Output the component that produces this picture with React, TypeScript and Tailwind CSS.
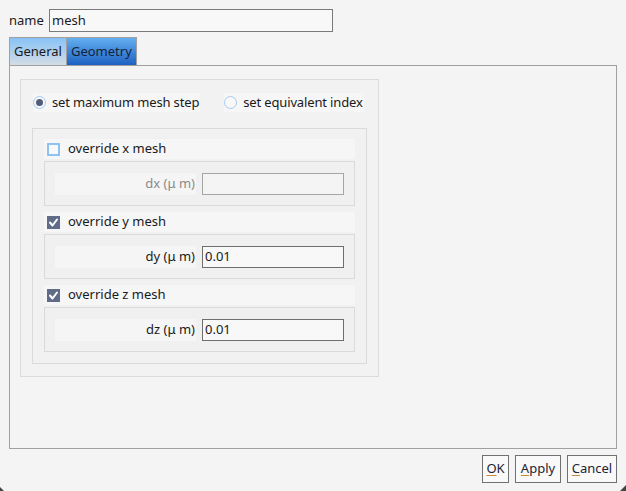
import React from 'react';

const Check = () => (
  <svg viewBox="0 0 13 13" className="w-[13px] h-[13px]">
    <path d="M3 6.5 L5.5 9.5 L10 3.5" fill="none" stroke="#ffffff" strokeWidth="2" strokeLinecap="round" strokeLinejoin="round" />
  </svg>
);

const CheckRow: React.FC<{ label: string; checked: boolean }> = ({ label, checked }) => (
  <div className="h-[20px] flex items-center bg-[#f6f6f6]">
    {checked ? (
      <div className="ml-[3px] w-[13px] h-[13px] bg-[#5f6b87] flex items-center justify-center">
        <Check />
      </div>
    ) : (
      <div className="ml-[3px] w-[13px] h-[13px] border-2 border-[#8ec2f4] bg-[#f9f9f9]" />
    )}
    <span className="ml-[8px]">{label}</span>
  </div>
);

const FieldBox: React.FC<{ label: string; value: string; disabled?: boolean }> = ({ label, value, disabled }) => (
  <div className="h-[45px] border border-[#dadada] bg-[#f0f0f0] flex items-center pl-[10px]">
    <div className={`w-[141px] h-[22px] bg-[#f5f5f5] flex items-center justify-end pr-[1px] ${disabled ? 'text-[#8a8a8a]' : 'text-[#1a1a1a]'}`}>
      {label} (μ m)
    </div>
    <div
      className={`ml-[6px] w-[142px] h-[22px] border flex items-center px-[2px] ${
        disabled ? 'border-[#a5a5a5] bg-[#f4f4f4]' : 'border-[#6e6e6e] bg-[#f8f8f8]'
      }`}
    >
      {value}
    </div>
  </div>
);

const Radio: React.FC<{ label: string; checked: boolean }> = ({ label, checked }) => (
  <div className="h-[19px] flex items-center bg-[#f6f6f6] pr-[1px] shrink-0 whitespace-nowrap tracking-[-0.15px]">
    <div className="w-[13px] h-[13px] rounded-full border border-[#a3cbf1] bg-[#f8f8f8] flex items-center justify-center">
      {checked && <div className="w-[7px] h-[7px] rounded-full bg-[#535d78]" />}
    </div>
    <span className="ml-[6px]">{label}</span>
  </div>
);

const Btn: React.FC<{ first: string; rest: string; w: string }> = ({ first, rest, w }) => (
  <div className={`${w} h-[28px] border border-[#707070] bg-[#f9f9f9] flex items-center justify-center text-[#1c2433]`}>
    <span className="underline decoration-[#c98a3a] underline-offset-2">{first}</span>
    {rest}
  </div>
);

export default function App() {
  return (
    <div
      className="relative w-[626px] h-[491px] bg-[#f4f4f4] text-[13px] text-[#1a1a1a] overflow-hidden"
      style={{ fontFamily: '"Noto Sans", "Open Sans", sans-serif' }}
    >
      <div className="flex items-center pt-[9px] pl-[9px]">
        <span className="w-[40px]">name</span>
        <div className="w-[284px] h-[23px] border border-[#7a7a7a] bg-[#f8f8f8] flex items-center px-[2px]">mesh</div>
      </div>

      <div className="flex ml-[9px] mt-[5px]">
        <div className="h-[28px] px-[4px] flex items-center border border-b-0 border-[#a0a0a0] bg-gradient-to-b from-[#87c2f6] to-[#d3dde5]">
          General
        </div>
        <div className="h-[28px] px-[4px] flex items-center border border-l-0 border-b-0 border-[#a0a0a0] bg-gradient-to-b from-[#64aef0] to-[#1d62c2] text-[#14233a]">
          Geometry
        </div>
      </div>

      <div className="mx-[9px] h-[384px] border border-[#a0a0a0] pt-[13px] pl-[10px]">
        <div className="w-[359px] h-[298px] border border-[#dcdcdc] bg-[#f2f2f2] pt-[13px] px-[11px]">
          <div className="flex items-center pl-[1px]">
            <Radio label="set maximum mesh step" checked />
            <div className="ml-[24px] shrink-0">
              <Radio label="set equivalent index" checked={false} />
            </div>
          </div>
          <div className="mt-[16px] h-[236px] border border-[#dadada] bg-[#f1f1f1] pt-[10px] px-[11px]">
            <CheckRow label="override x mesh" checked={false} />
            <div className="mt-[2px]">
              <FieldBox label="dx" value="" disabled />
            </div>
            <div className="mt-[6px]">
              <CheckRow label="override y mesh" checked />
            </div>
            <div className="mt-[2px]">
              <FieldBox label="dy" value="0.01" />
            </div>
            <div className="mt-[6px]">
              <CheckRow label="override z mesh" checked />
            </div>
            <div className="mt-[2px]">
              <FieldBox label="dz" value="0.01" />
            </div>
          </div>
        </div>
      </div>

      <div className="flex justify-end gap-[6px] mt-[6px] mr-[9px]">
        <Btn first="O" rest="K" w="w-[27px]" />
        <Btn first="A" rest="pply" w="w-[46px]" />
        <Btn first="C" rest="ancel" w="w-[50px]" />
      </div>

      <div className="absolute right-0 bottom-0 w-0 h-0 border-l-[6px] border-l-transparent border-b-[6px] border-b-[#444]" />
      <div className="absolute left-0 bottom-0 w-0 h-0 border-r-[4px] border-r-transparent border-b-[4px] border-b-[#444]" />
    </div>
  );
}
